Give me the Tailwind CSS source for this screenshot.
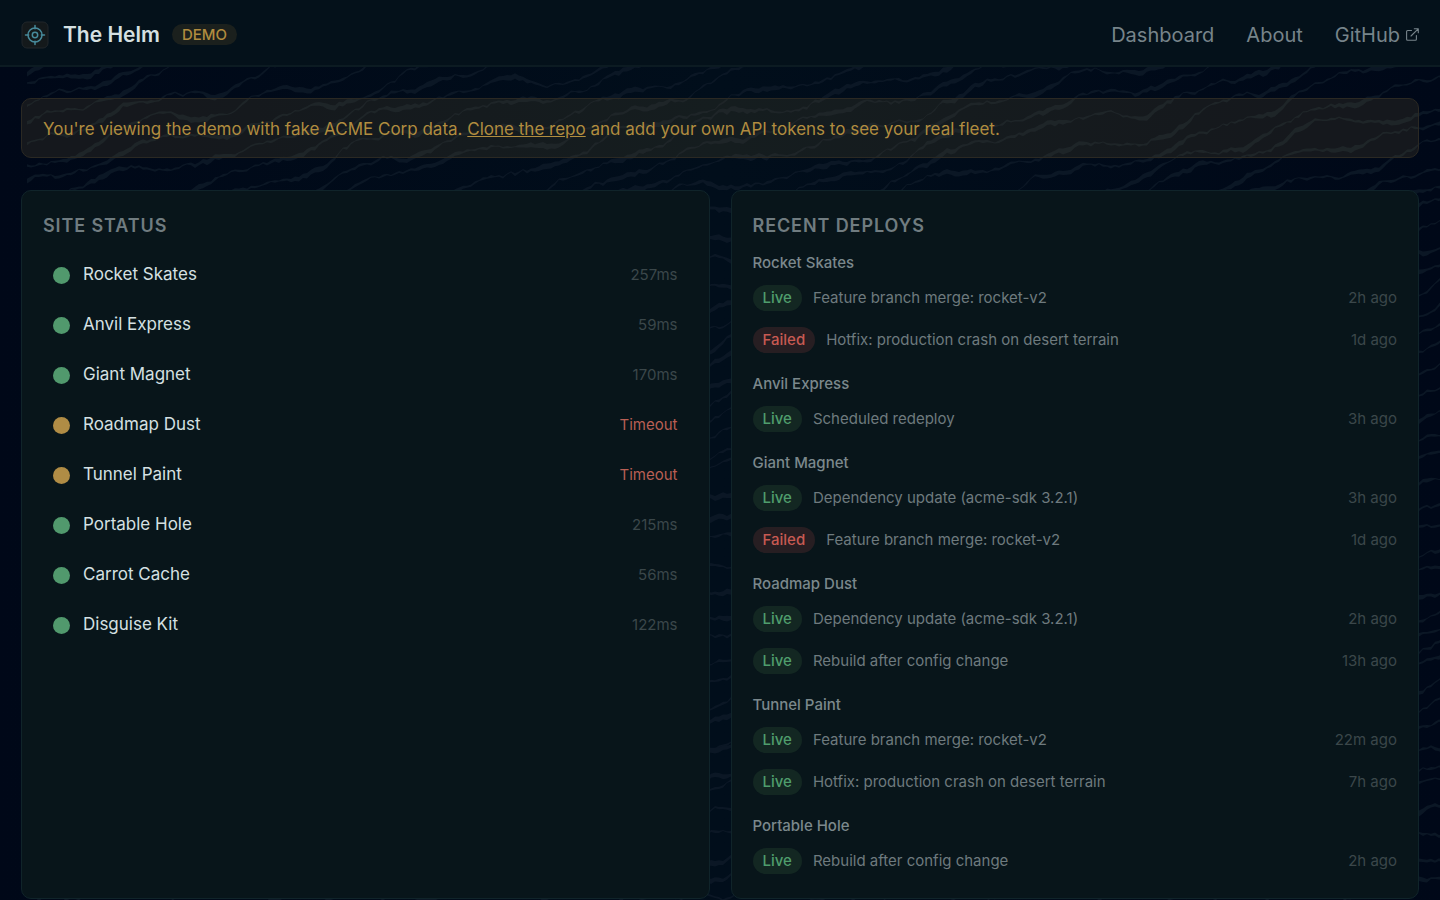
<!DOCTYPE html>
<html lang="en">
  <head>
    <meta charset="UTF-8" />
    <meta name="viewport" content="width=device-width, initial-scale=1.0" />
    <script src="https://cdn.jsdelivr.net/npm/@tailwindcss/browser@4"></script>
    <title>The Helm</title>
  </head>
  <body
    class="relative isolate min-h-screen bg-linear-to-r from-[#000818] via-[#010e1b] to-[#000818] font-[Inter,sans-serif] text-[#d5e0e2]"
  >
    <!-- wave lines behind the page -->
    <svg
      id="waves"
      class="absolute inset-0 -z-10 h-full w-full"
      viewBox="0 0 1440 900"
      preserveAspectRatio="xMidYMin slice"
      fill="#0b1725"
      aria-hidden="true"
    ></svg>

    <header
      class="flex h-[67px] items-center justify-between border-b-2 border-[#0c1b22] bg-[#04111a] px-[21px] pt-1"
    >
      <a href="#" class="flex items-center">
        <svg class="h-7 w-7" viewBox="0 0 28 28" fill="none" aria-hidden="true">
          <rect x="1" y="1" width="26" height="26" rx="5" fill="#14191b" stroke="#20262a" />
          <g stroke="#478a9b" stroke-width="1.5" stroke-linecap="round">
            <circle cx="14" cy="14" r="7" />
            <circle cx="14" cy="14" r="2.7" />
            <path d="M14 4.5v3.2M14 20.3v3.2M4.5 14h3.2M20.3 14h3.2" />
          </g>
        </svg>
        <span class="ml-[14px] text-[21px] font-semibold">The Helm</span>
        <span
          class="ml-3 rounded-full bg-[#1b201d] px-[10px] text-[15px] leading-[21px] font-medium text-[#b08c3f]"
          >DEMO</span
        >
      </a>
      <nav class="flex items-center gap-8 text-[20px] text-[#77848a]">
        <a href="#">Dashboard</a>
        <a href="#">About</a>
        <a href="#" class="flex items-center gap-[6px]">
          GitHub
          <svg
            class="h-[13px] w-[13px]"
            viewBox="0 0 13 13"
            fill="none"
            stroke="currentColor"
            stroke-width="1.1"
            stroke-linecap="round"
            stroke-linejoin="round"
            aria-hidden="true"
          >
            <path d="M5.5 2.5H1.6a1 1 0 0 0-1 1v7.8a1 1 0 0 0 1 1h7.8a1 1 0 0 0 1-1V7.5" />
            <path d="M8.3 .7h4v4M12.2 .8 5 8" />
          </svg>
        </a>
      </nav>
    </header>

    <main class="px-[21px] pt-[31px]">
      <p
        class="rounded-[10px] border border-[#2b2923] bg-[#b08c3f]/12 px-[21px] pt-[17px] pb-[15px] text-[17px] leading-[26px] text-[#b08c3f]"
      >
        You're viewing the demo with fake ACME Corp data.
        <a href="#" class="underline">Clone the repo</a> and add your own API
        tokens to see your real fleet.
      </p>

      <div class="mt-8 grid grid-cols-2 gap-[21px]">
        <section
          class="rounded-[10px] border border-[#10242a] bg-[#08151a] px-[21px] pt-[22px] pb-4"
        >
          <h2
            class="text-[18px] leading-[26px] font-semibold tracking-wider text-[#707c80] uppercase"
          >
            Site Status
          </h2>
          <ul id="siteList" class="mt-[11px]"></ul>
        </section>

        <section
          class="rounded-[10px] border border-[#10242a] bg-[#08151a] px-[21px] pt-[22px] pb-4"
        >
          <h2
            class="text-[18px] leading-[26px] font-semibold tracking-wider text-[#707c80] uppercase"
          >
            Recent Deploys
          </h2>
          <div id="deployList" class="mt-3 flex flex-col gap-[11px]"></div>
        </section>
      </div>
    </main>

    <script>
      const sites = [
        ["Rocket Skates", "257ms"],
        ["Anvil Express", "59ms"],
        ["Giant Magnet", "170ms"],
        ["Roadmap Dust", "Timeout"],
        ["Tunnel Paint", "Timeout"],
        ["Portable Hole", "215ms"],
        ["Carrot Cache", "56ms"],
        ["Disguise Kit", "122ms"],
      ];

      const deploys = [
        ["Rocket Skates", [
          ["Live", "Feature branch merge: rocket-v2", "2h ago"],
          ["Failed", "Hotfix: production crash on desert terrain", "1d ago"],
        ]],
        ["Anvil Express", [["Live", "Scheduled redeploy", "3h ago"]]],
        ["Giant Magnet", [
          ["Live", "Dependency update (acme-sdk 3.2.1)", "3h ago"],
          ["Failed", "Feature branch merge: rocket-v2", "1d ago"],
        ]],
        ["Roadmap Dust", [
          ["Live", "Dependency update (acme-sdk 3.2.1)", "2h ago"],
          ["Live", "Rebuild after config change", "13h ago"],
        ]],
        ["Tunnel Paint", [
          ["Live", "Feature branch merge: rocket-v2", "22m ago"],
          ["Live", "Hotfix: production crash on desert terrain", "7h ago"],
        ]],
        ["Portable Hole", [["Live", "Rebuild after config change", "2h ago"]]],
      ];

      const badgeColors = {
        Live: "bg-[#132722] text-[#4f9d6c]",
        Failed: "bg-[#271e22] text-[#c75a52]",
      };

      for (const [name, time] of sites) {
        const down = time === "Timeout";
        document.getElementById("siteList").innerHTML += `
          <li class="flex h-[50px] items-center px-[10px]">
            <span class="h-[17px] w-[17px] rounded-full ${down ? "bg-[#b08c45]" : "bg-[#51996d]"}"></span>
            <span class="ml-[13px] text-[17px]">${name}</span>
            <span class="ml-auto text-[15px] ${down ? "text-[#b95f54]" : "text-[#3b474a]"}">${time}</span>
          </li>`;
      }

      for (const [name, rows] of deploys) {
        const items = rows.map(
          ([status, title, time]) => `
          <li class="flex h-[42px] items-center">
            <span class="rounded-full px-[10px] text-[15px] leading-[26px] font-medium ${badgeColors[status]}">${status}</span>
            <span class="ml-[11px] text-[15px] text-[#6e7a7e]">${title}</span>
            <span class="ml-auto text-[15px] text-[#3b474a]">${time}</span>
          </li>`
        );
        document.getElementById("deployList").innerHTML += `
          <div>
            <h3 class="mb-[2px] text-[15px] leading-6 font-medium text-[#7b888c]">${name}</h3>
            <ul>${items.join("")}</ul>
          </div>`;
      }

      // small seeded generator so the waves look the same on every load
      let seed = 7;
      function rand() {
        seed = (seed * 16807) % 2147483647;
        return seed / 2147483647;
      }

      function drawWaves() {
        let paths = "";
        for (let start = 60; start < 1400; start += 21) {
          const phase = rand() * 2;
          let top = "";
          let bottom = "";
          let drift = 0;
          for (let x = 27; x <= 1446; x += 4) {
            drift = (drift + (rand() - 0.5) * 5) * 0.93;
            const y =
              start -
              (x - 27) * 0.3 +
              Math.sin(x / 21 + phase + start / 50) * 5 +
              Math.sin(x / 61 + start / 60) * 7 +
              drift;
            const thick =
              1 + Math.max(0, Math.sin(x / 17 + phase * 2)) * 3 + rand() * 2;
            top += `${top ? "L" : "M"}${x} ${y.toFixed(1)}`;
            bottom = `L${x} ${(y + thick).toFixed(1)}` + bottom;
          }
          paths += `<path d="${top}${bottom}Z" />`;
        }
        document.getElementById("waves").innerHTML = paths;
      }

      drawWaves();
    </script>
  </body>
</html>
